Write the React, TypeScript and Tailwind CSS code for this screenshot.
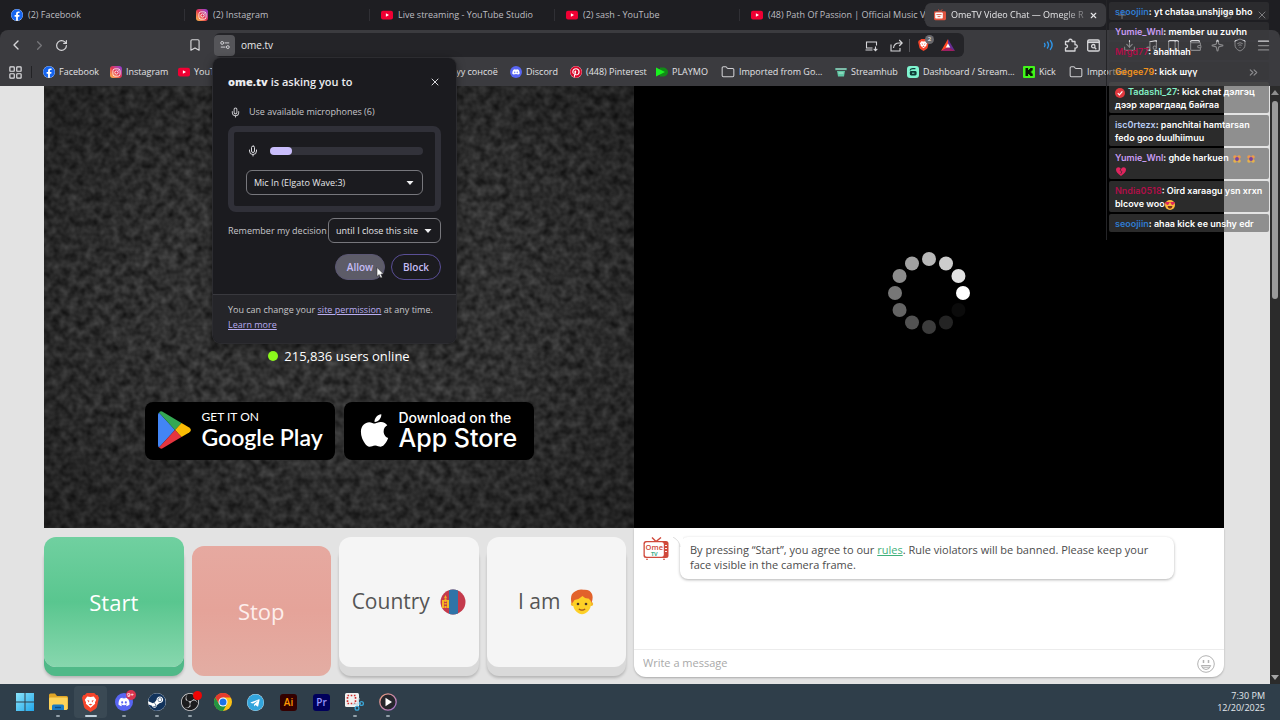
import React from 'react'
import {
  Bookmark,
  ChevronLeft,
  ChevronRight,
  ChevronsRight,
  Download,
  Folder,
  LayoutGrid,
  Menu,
  Mic,
  Minus,
  Music,
  PanelRight,
  Plus,
  RotateCw,
  Sparkle,
  Square,
  Wallet,
  X
} from 'lucide-react'
import { FaApple, FaDiscord, FaFacebook, FaInstagram, FaPinterest, FaSteam, FaTelegram } from 'react-icons/fa'
import { SiObsstudio } from 'react-icons/si'

interface IconProps {
  className?: string
}

const FacebookIcon = () => (
  <span className="flex shrink-0 rounded-full bg-white text-[#1565f0]">
    <FaFacebook size={12} />
  </span>
)

const InstagramIcon = () => (
  <span className="flex h-3 w-3 shrink-0 items-center justify-center rounded-[3px] bg-linear-to-tr from-[#fdc04a] via-[#e4304f] to-[#8a2be2] text-white">
    <FaInstagram size={9} />
  </span>
)

const YoutubeIcon = () => (
  <svg viewBox="0 0 12 12" className="h-3 w-3 shrink-0">
    <rect y="1.8" width="12" height="8.6" rx="2" fill="#f00033" />
    <path d="M4.9 4.3v3.5L8 6.05z" fill="#fff" />
  </svg>
)

const DiscordIcon = () => (
  <span className="flex h-3 w-3 shrink-0 items-center justify-center rounded-full bg-[#5865f2] text-white">
    <FaDiscord size={8} />
  </span>
)

const PinterestIcon = () => (
  <span className="flex shrink-0 rounded-full bg-white text-[#d8082b]">
    <FaPinterest size={12} />
  </span>
)

const PlaymoIcon = () => (
  <svg viewBox="0 0 12 12" className="h-3 w-3 shrink-0">
    <path d="M4 1.5h4Q12 3 12 6t-4 4.500H4z" fill="#128a17" />
    <path d="M0 1.500L9 6l-9 4.500z" fill="#19f01f" />
  </svg>
)

const FolderIcon = () => <Folder size={14} strokeWidth={1.8} className="shrink-0 text-[#cfcfd2]" />

const StreamhubIcon = () => (
  <svg viewBox="0 0 12 12" className="h-3 w-3 shrink-0">
    <path d="M0 2h12v2.2H0z" fill="#4f9c86" />
    <path d="M2 5h8l-1 5.4H3z" fill="#5fc7a4" />
    <path d="M1 3h10M3.5 7h5" stroke="#d9f5ea" strokeWidth="0.7" />
  </svg>
)

const DashboardIcon = () => (
  <svg viewBox="0 0 12 12" className="h-3 w-3 shrink-0">
    <rect width="12" height="12" rx="3" fill="#7ff5d0" />
    <path d="M3 4.4Q3.600 2.600 6 2.600h2.400" stroke="#0d3b35" strokeWidth="1.100" fill="none" />
    <rect x="2.800" y="5" width="6.800" height="4.400" rx="1.400" fill="#0d3b35" />
    <path d="M5 7.2h2.4" stroke="#7ff5d0" strokeWidth="0.9" />
  </svg>
)

const KickIcon = () => (
  <svg viewBox="0 0 12 12" className="h-3 w-3 shrink-0">
    <rect width="12" height="12" rx="1" fill="#41f51a" />
    <path d="M2.5 2h2.6v2h1V3h1V2h2.6v2.6h-1v.8h-1v1.2h1v.8h1V10H7.1V9h-1V8h-1v2H2.5z" fill="#0b1408" />
  </svg>
)

const OmeIcon = () => (
  <svg viewBox="0 0 12 12" className="h-3 w-3 shrink-0">
    <path d="M4 .5L6 2.4 8.4.5" stroke="#e0533f" fill="none" strokeWidth="0.9" />
    <rect y="2.2" width="12" height="9" rx="1.4" fill="#e0533f" />
    <rect x="1.2" y="3.6" width="7.6" height="6" rx="0.8" fill="#fff" />
    <path d="M2.4 5.6h5.2M3.6 7.6h2.8" stroke="#d9503c" strokeWidth="0.9" />
  </svg>
)

const BraveIcon = ({ className }: IconProps) => (
  <svg viewBox="0 0 18 20" className={className}>
    <path d="M5 0h8l2 2h1.5L18 5l-.6 2.500-1.600 7.200q-.4 1.300-1.600 2.100L9 20l-5.200-3.200q-1.200-.8-1.600-2.100L.6 7.500 0 5l1.500-3H3z" fill="#f5442a" />
    <path d="M9 4.300l3.500-.6L15 7l-1.300 3 .2 1.200-2.500 2.200L9 15.500l-2.400-2.100-2.500-2.200.2-1.200L3 7l2.500-3.300z" fill="#fff" />
    <path d="M5.500 7.300l2.300.8-.5 2zM12.500 7.300l-2.300.8.5 2zM7 12l2-.7 2 .7-2 1.200z" fill="#f5442a" />
  </svg>
)

const tabs = [
  { title: '(2) Facebook', icon: FacebookIcon },
  { title: '(2) Instagram', icon: InstagramIcon },
  { title: 'Live streaming - YouTube Studio', icon: YoutubeIcon },
  { title: '(2) sash - YouTube', icon: YoutubeIcon },
  { title: '(48) Path Of Passion | Official Music V', icon: YoutubeIcon }
]

const bookmarks = [
  { title: 'Facebook', icon: FacebookIcon, width: 'w-[67px]' },
  { title: 'Instagram', icon: InstagramIcon, width: 'w-[68px]' },
  { title: 'YouTube', icon: YoutubeIcon, width: 'w-[272px]' },
  { title: 'Дуу сонсоё', icon: null, width: 'w-[60px]' },
  { title: 'Discord', icon: DiscordIcon, width: 'w-[60px]' },
  { title: '(448) Pinterest', icon: PinterestIcon, width: 'w-[86px]' },
  { title: 'PLAYMO', icon: PlaymoIcon, width: 'w-[65px]' },
  { title: 'Imported from Go...', icon: FolderIcon, width: 'w-[114px]' },
  { title: 'Streamhub', icon: StreamhubIcon, width: 'w-[72px]' },
  { title: 'Dashboard / Stream...', icon: DashboardIcon, width: 'w-[116px]' },
  { title: 'Kick', icon: KickIcon, width: 'w-[46px]' },
  { title: 'Imported', icon: FolderIcon, width: 'w-[60px]' }
]

function TabStrip() {
  return (
    <div className="flex h-[30px] items-center bg-[#1e1e22] text-[9px] text-[#bdbdc1]">
      {tabs.map((tab) => (
        <div key={tab.title} className="flex h-3 w-[185px] shrink-0 items-center border-r border-[#303035] pl-[11px]">
          <button className="flex min-w-0 items-center gap-[5px]">
            <tab.icon />
            <span className="whitespace-nowrap">{tab.title}</span>
          </button>
        </div>
      ))}
      <div className="flex h-6 w-[181px] shrink-0 items-center gap-[5px] rounded-md bg-[#3b3b3f] pr-2 pl-[9px] text-[#e6e6e8]">
        <OmeIcon />
        <span className="flex-1 whitespace-nowrap [mask-image:linear-gradient(90deg,#000_110px,transparent_145px)]">
          OmeTV Video Chat — Omegle R
        </span>
        <button aria-label="Close tab">
          <X size={9} strokeWidth={3} />
        </button>
      </div>
      <button aria-label="New tab" className="ml-[10px]">
        <Plus size={12} />
      </button>
      <div className="ml-auto flex items-center gap-6 pr-3">
        <button aria-label="Minimize">
          <Minus size={10} />
        </button>
        <button aria-label="Maximize">
          <Square size={8} />
        </button>
        <button aria-label="Close window">
          <X size={12} />
        </button>
      </div>
    </div>
  )
}

function BraveRewardsIcon() {
  return (
    <svg viewBox="0 0 14 12" className="h-3 w-[14px]">
      <path d="M7 0L0 12l7-3z" fill="#ff4724" />
      <path d="M7 0l7 12-7-3z" fill="#662d91" />
      <path d="M0 12l7-4 7 4z" fill="#9e1f63" />
      <path d="M7 4.500l2.300 4H4.700z" fill="#fff" />
    </svg>
  )
}

function SoundIcon() {
  return (
    <svg viewBox="0 0 12 12" className="h-3 w-3" fill="none" stroke="#2f95e8" strokeWidth="1.4" strokeLinecap="round">
      <path d="M1.5 4.4q1.2 1.6 0 3.2M4.400 3q2.200 3 0 6M7.400 1.600q3.400 4.400 0 8.800" />
    </svg>
  )
}

function Toolbar() {
  return (
    <div className="flex h-7 items-center pt-[2px] text-[#d6d6d9]">
      <div className="flex items-center gap-2 pl-2">
        <button aria-label="Back">
          <ChevronLeft size={16} strokeWidth={2} />
        </button>
        <button aria-label="Forward" className="text-[#77777b]">
          <ChevronRight size={15} strokeWidth={2} />
        </button>
        <button aria-label="Reload">
          <RotateCw size={13} strokeWidth={2.2} />
        </button>
      </div>
      <button aria-label="Bookmark this page" className="ml-[120px]">
        <Bookmark size={14} strokeWidth={2} />
      </button>
      <div className="ml-3 flex h-6 flex-1 items-center rounded-md bg-[#242428]">
        <button aria-label="Site information" className="flex h-[21px] w-[21px] items-center justify-center rounded bg-[#555559]">
          <svg viewBox="0 0 12 12" className="h-[10px] w-[10px]" fill="none" stroke="#dcdce0" strokeWidth="1.1">
            <circle cx="2.600" cy="3.5" r="1.7" />
            <circle cx="9.400" cy="8.5" r="1.7" />
            <path d="M5.5 3.5H11M1 8.5h5.5" />
          </svg>
        </button>
        <input
          aria-label="Address"
          defaultValue="ome.tv"
          className="ml-[6px] min-w-0 flex-1 bg-transparent text-[10px] text-[#e8e8ea] outline-none"
        />
        <div className="flex items-center gap-3 pr-[9px]">
          <button aria-label="Install">
            <svg viewBox="0 0 13 13" className="h-[13px] w-[13px]" fill="none" stroke="currentColor" strokeWidth="1.1">
              <path d="M7.500 9H1.500V3h10v3.500M.5 11h7M10.500 7.500v4M8.700 9.800l1.800 1.800 1.800-1.800" />
            </svg>
          </button>
          <button aria-label="Share" className="border-r border-[#55555a] pr-[6px]">
            <svg viewBox="0 0 13 13" className="h-[13px] w-[13px]" fill="none" stroke="currentColor" strokeWidth="1.1">
              <path d="M1 5.5V12h9V9M3.5 9c.4-3.2 2.400-5 5.700-5H12M9.200 1L12.200 4 9.200 7" />
            </svg>
          </button>
          <button aria-label="Brave Shields" className="relative -ml-1">
            <BraveIcon className="h-3 w-[11px]" />
            <span className="absolute -top-[4px] left-[7px] flex h-[9px] w-[9px] items-center justify-center rounded-full bg-[#68686c] text-[6px] text-white">
              2
            </span>
          </button>
          <button aria-label="Rewards">
            <BraveRewardsIcon />
          </button>
        </div>
      </div>
      <div className="ml-[79px] flex items-center gap-[9px] pr-[9px]">
        <button aria-label="Media sound">
          <SoundIcon />
        </button>
        <button aria-label="Extensions">
          <svg viewBox="0 0 14 14" className="h-[14px] w-[14px]" fill="none" stroke="currentColor" strokeWidth="1.300" strokeLinejoin="round">
            <path d="M1.500 3.500h3.300a1.700 1.700 0 1 1 3.200 0h3v3.300a1.700 1.700 0 1 1 0 3.200v3H1.500V9.800a1.600 1.600 0 1 0 0-3.100z" />
          </svg>
        </button>
        <button aria-label="Search tabs">
          <svg viewBox="0 0 13 13" className="h-[13px] w-[13px]" fill="none" stroke="currentColor" strokeWidth="1.3">
            <rect x="0.700" y="1" width="11.600" height="11" rx="1.300" />
            <path d="M.7 3.200h11.600" strokeWidth="1.800" />
            <circle cx="6.300" cy="7.200" r="1.700" />
            <path d="M7.600 8.500l1.700 1.700" />
          </svg>
        </button>
        <button aria-label="Downloads" className="ml-[14px]">
          <Download size={13} />
        </button>
        <button aria-label="Playlist">
          <Music size={13} />
        </button>
        <button aria-label="Sidebar">
          <PanelRight size={13} />
        </button>
        <button aria-label="Wallet">
          <Wallet size={13} />
        </button>
        <button aria-label="Leo AI">
          <Sparkle size={13} />
        </button>
        <button aria-label="VPN">
          <svg viewBox="0 0 14 14" className="h-[14px] w-[14px]" fill="none" stroke="currentColor" strokeWidth="1">
            <path d="M7 1l5 1.800v4Q12 11 7 13 2 11 2 6.800v-4z" />
            <path d="M4.300 5.700q2.700-2 5.400 0M5.300 7.400q1.700-1.200 3.400 0M7 9v.8" />
          </svg>
        </button>
        <button aria-label="Menu">
          <Menu size={15} />
        </button>
      </div>
    </div>
  )
}

function BookmarksBar() {
  return (
    <div className="flex h-7 items-center overflow-hidden pl-2 text-[9px] text-[#e2e2e5]">
      <button aria-label="All bookmarks">
        <LayoutGrid size={15} strokeWidth={1.9} />
      </button>
      <span className="mr-[11px] ml-2 h-3 w-px shrink-0 bg-[#222225]" />
      {bookmarks.map((item, index) => (
        <div key={index} className={`flex shrink-0 ${item.width}`}>
          <a href="#" className="flex min-w-0 items-center gap-1 whitespace-nowrap">
            {item.icon ? <item.icon /> : ''}
            <span>{item.title}</span>
          </a>
        </div>
      ))}
      <button aria-label="More bookmarks" className="mr-5 ml-auto">
        <ChevronsRight size={13} />
      </button>
    </div>
  )
}

function Caret({ className }: IconProps) {
  return (
    <svg viewBox="0 0 8 4" className={`pointer-events-none absolute h-1 w-2 ${className}`}>
      <path d="M0.500 0h7L4 4z" fill="#f0f0f2" />
    </svg>
  )
}

function PermissionDialog() {
  return (
    <div
      role="dialog"
      aria-labelledby="permission-title"
      className="absolute top-[58px] left-[213px] w-[243px] overflow-hidden rounded-lg bg-[#1b1b1f] text-[9px] text-[#c6c6ca] shadow-[0_0_0_1px_#2c2c30,0_2px_8px_rgba(0,0,0,0.5)]"
    >
      <div className="px-[15px] pt-4 pb-[14px]">
        <div className="flex items-center justify-between">
          <h1 id="permission-title" className="text-[11px] leading-4 font-semibold text-[#ececef]">
            <b>ome.tv</b> is asking you to
          </h1>
          <button aria-label="Close" className="text-[#d8d8dc]">
            <X size={12} />
          </button>
        </div>
        <div className="mt-[14px] flex items-center gap-2 pl-[2px] leading-4">
          <Mic size={11} strokeWidth={2.2} />
          <span>Use available microphones (6)</span>
        </div>
        <div className="mt-[6px] rounded-lg border-6 border-[#303038] px-3 pt-[13px] pb-[11px]">
          <div className="flex items-center gap-[11px]">
            <Mic size={12} className="ml-[1px] text-[#d8d8dc]" />
            <div className="h-2 flex-1 rounded-full bg-[#32323a]">
              <div className="h-2 w-[22px] rounded-full bg-[#c9bdfb]" />
            </div>
          </div>
          <div className="relative mt-[13px]">
            <select
              aria-label="Microphone"
              className="block h-[25px] w-full appearance-none rounded-md border border-[#77777c] bg-transparent px-[7px] text-[#e6e6e9]"
            >
              <option>Mic In (Elgato Wave:3)</option>
            </select>
            <Caret className="top-[11px] right-[9px]" />
          </div>
        </div>
        <div className="mt-[6px] flex items-center justify-between">
          <label htmlFor="remember" className="whitespace-nowrap">
            Remember my decision
          </label>
          <div className="relative">
            <select
              id="remember"
              className="block h-[25px] w-[113px] appearance-none rounded-md border border-[#77777c] bg-transparent px-[7px] text-[#e6e6e9]"
            >
              <option>until I close this site</option>
            </select>
            <Caret className="top-[11px] right-[9px]" />
          </div>
        </div>
        <div className="mt-[11px] flex justify-end gap-[6px] text-[10px] font-semibold text-[#c5bcf5]">
          <button className="relative h-[26px] w-[50px] rounded-full border border-[#5b5773] bg-[#5d5c68]">
            Allow
            <svg viewBox="0 0 8 12" className="absolute top-3 right-0 h-3 w-2">
              <path d="M1 0.500v9l2.200-2 1.500 3.500 1.600-.7-1.500-3.300H7.500z" fill="#fff" stroke="#222" strokeWidth="0.500" />
            </svg>
          </button>
          <button className="h-[26px] w-[50px] rounded-full border border-[#5a4f96]">Block</button>
        </div>
      </div>
      <p className="border-t border-[#39393e] bg-[#252529] px-[15px] pt-[7px] pb-[11px] leading-[15px]">
        You can change your{' '}
        <a href="#" className="text-[#b8acf0] underline">
          site permission
        </a>{' '}
        at any time.
        <br />
        <a href="#" className="text-[#b8acf0] underline">
          Learn more
        </a>
      </p>
    </div>
  )
}

function Static() {
  return (
    <svg className="absolute inset-0 h-full w-full" aria-hidden="true">
      <defs>
        <filter id="static" x="0" y="0" width="100%" height="100%" colorInterpolationFilters="sRGB">
          <feTurbulence type="fractalNoise" baseFrequency="0.12" numOctaves="2" seed="7" />
          <feColorMatrix values="0.280 0 0 0 0.050  0.280 0 0 0 0.050  0.280 0 0 0 0.050  0 0 0 0 1" />
        </filter>
        <radialGradient id="vignette" r="0.750">
          <stop offset="0.400" stopColor="#000" stopOpacity="0" />
          <stop offset="1" stopColor="#000" stopOpacity="0.350" />
        </radialGradient>
      </defs>
      <rect width="100%" height="100%" filter="url(#static)" />
      <rect width="100%" height="100%" fill="url(#vignette)" />
    </svg>
  )
}

function LocalVideo() {
  return (
    <section className="relative flex min-w-0 flex-1 basis-1/2 flex-col items-center justify-end overflow-hidden bg-[#2b2b2b] pb-[68px] text-white">
      <Static />
      <p className="relative mb-[38px] flex items-center gap-[6px] text-[13px] leading-4">
        <span className="h-[10px] w-[10px] rounded-full bg-[#8cf91c]" />
        215,836 users online
      </p>
      <div className="relative flex gap-[9px]">
        <a href="#" className="flex h-[58px] w-[190px] items-center gap-[11px] rounded-lg bg-black pb-[2px] pl-[13px] font-['Lato',sans-serif]">
          <svg viewBox="0 0 33 38" className="h-[38px] w-[33px] shrink-0">
            <path d="M1 1.500Q0 2.500 0 4v30q0 1.500 1 2.500L17 19z" fill="#4285f4" />
            <path d="M1 1.500Q2.800-.4 5 .9L23.500 12 17 19z" fill="#34a853" />
            <path d="M23.500 12l7.700 4.500q3.400 2.500 0 5L23.500 26 17 19z" fill="#fbbc04" />
            <path d="M1 36.500q1.800 1.900 4 .6L23.500 26 17 19z" fill="#e5353f" />
          </svg>
          <span className="flex flex-col">
            <span className="text-[12px] leading-[14px]">GET IT ON</span>
            <span className="text-[23px] leading-[26px] font-semibold">Google Play</span>
          </span>
        </a>
        <a href="#" className="flex h-[58px] w-[190px] items-center gap-[6px] rounded-lg bg-black pb-[2px] pl-3 font-['Inter',sans-serif]">
          <FaApple size={37} className="shrink-0" />
          <span className="flex flex-col">
            <span className="text-[14px] leading-4 font-medium">Download on the</span>
            <span className="text-[25px] leading-[25px] font-medium">App Store</span>
          </span>
        </a>
      </div>
    </section>
  )
}

const spinnerShades = ['#ffffff', '#e2e2e2', '#cdcdcd', '#b8b8b8', '#a2a2a2', '#8c8c8c', '#777777', '#646464', '#525252', '#3c3c3c', '#242424', '#0b0b0b']

function RemoteVideo() {
  return (
    <section className="flex min-w-0 flex-1 basis-1/2 items-center justify-center bg-black pb-7">
      <svg viewBox="0 0 84 84" className="h-[84px] w-[84px]" role="img" aria-label="Loading">
        {spinnerShades.map((shade, index) => {
          const angle = (index * Math.PI) / 6
          return <circle key={shade} cx={42 + 34 * Math.cos(angle)} cy={42 - 34 * Math.sin(angle)} r="7" fill={shade} />
        })}
      </svg>
    </section>
  )
}

function MongoliaFlag() {
  return (
    <svg viewBox="0 0 26 26" className="h-[26px] w-[26px]">
      <clipPath id="flag">
        <circle cx="13" cy="13" r="12.500" />
      </clipPath>
      <g clipPath="url(#flag)">
        <rect width="26" height="26" fill="#c43a4c" />
        <rect x="9" width="9" height="26" fill="#2f74a8" />
        <path d="M2 11h2v8H2zM7 11h2v8H7zM4.400 14h2.200v1.500H4.400zM4.400 17h2.200v2H4.400z" fill="#f5b521" />
        <circle cx="5.500" cy="11.500" r="1.500" fill="#f5b521" />
        <path d="M5.500 6l1.200 2.500a1.200 1.200 0 1 1-2.400 0z" fill="#f5b521" />
      </g>
    </svg>
  )
}

function BoyIcon() {
  return (
    <svg viewBox="0 0 24 26" className="h-[26px] w-6">
      <circle cx="2.800" cy="15" r="2" fill="#f5b829" />
      <circle cx="21.200" cy="15" r="2" fill="#f5b829" />
      <path d="M3 11q0-7 9-7t9 7v5q-1 6-6 8.500-3 1.500-6 0Q4 22 3 16z" fill="#fdd027" />
      <path d="M1.500 14Q-.5 5 5 2.500 9-.5 14 .8q6-.4 8 4.200 1.500 4-.5 9-.5-3-3-4.500-3 .5-6-2.500Q9 10.500 4.500 11 3.500 12 3 13.500z" fill="#e2622b" />
      <circle cx="8" cy="15" r="1.300" fill="#49352b" />
      <circle cx="16" cy="15" r="1.300" fill="#49352b" />
      <path d="M8.800 20q3.200 2.200 6.400 0" stroke="#a3541c" strokeWidth="1.100" fill="none" />
    </svg>
  )
}

function Controls() {
  return (
    <div className="grid min-w-0 flex-1 basis-1/2 grid-cols-4 gap-2 pt-[9px] pr-2 text-[22px]">
      <button className="h-[130px] rounded-xl bg-linear-to-b from-[#70d0a0] via-[#59c68f] to-[#87d7ae] text-white shadow-[0_9px_0_#50b988,0_11px_3px_rgba(0,0,0,0.2)]">
        Start
      </button>
      <button className="mt-[9px] h-[130px] rounded-xl bg-linear-to-b from-[#e6a9a0] via-[#e5a399] to-[#e3ada3] text-[#fdeeec]">Stop</button>
      <button className="flex h-[130px] items-center justify-center gap-[10px] rounded-xl bg-[#f5f5f5] text-[21px] text-[#555] shadow-[0_9px_0_#d9d9d9,0_11px_3px_rgba(0,0,0,0.2)]">
        Country <MongoliaFlag />
      </button>
      <button className="flex h-[130px] items-center justify-center gap-[10px] rounded-xl bg-[#f5f5f5] text-[21px] text-[#555] shadow-[0_9px_0_#d9d9d9,0_11px_3px_rgba(0,0,0,0.2)]">
        I am <BoyIcon />
      </button>
    </div>
  )
}

function ChatPanel() {
  return (
    <div className="flex h-[149px] min-w-0 flex-1 basis-1/2 flex-col rounded-b-xl bg-white text-[#4c4c4c] shadow-[0_1px_2px_rgba(0,0,0,0.25)]">
      <div className="flex flex-1 items-start gap-[11px] pt-[9px] pl-[9px]">
        <svg viewBox="0 0 26 23" className="h-[23px] w-[26px]">
          <path d="M9 .5l4 4L18 .5" stroke="#d0493b" strokeWidth="1.400" fill="none" />
          <rect x="0.500" y="4" width="25" height="17" rx="2.500" fill="#d0493b" />
          <rect x="1.800" y="5.300" width="19" height="14.400" rx="2" fill="#fff" />
          <path d="M4 21l-1 2h2zM21 21l1 2h-2z" fill="#d0493b" />
          <path d="M22 8.500h2M22 11.500h2M22 14.500h2" stroke="#fff" strokeWidth="0.900" />
          <text x="11.300" y="12.500" textAnchor="middle" fontSize="7.500" fontWeight="600" fill="#d0493b">
            Ome
          </text>
          <text x="11.300" y="18.800" textAnchor="middle" fontSize="5.500" fontWeight="700" fill="#3fae8c">
            TV
          </text>
        </svg>
        <div className="relative w-[494px] rounded-lg bg-white px-[10px] pt-[5px] pb-[7px] text-[11px] leading-[15px] shadow-[0_1px_3px_rgba(0,0,0,0.3)]">
          <svg viewBox="0 0 10 10" className="absolute top-0 -left-[7px] h-[10px] w-[10px]">
            <path d="M0 0h10v10H7Q7 5 0 0" fill="#fff" />
            <path d="M0 0Q7 4 7 10" fill="none" stroke="#d4d4d4" strokeWidth="0.800" />
          </svg>
          By pressing “Start”, you agree to our{' '}
          <a href="#" className="text-[#3fb07b] underline">
            rules
          </a>
          . Rule violators will be banned. Please keep your face visible in the camera frame.
        </div>
      </div>
      <div className="flex h-7 items-center border-t border-[#ececec] px-[9px]">
        <input
          aria-label="Message"
          placeholder="Write a message"
          className="min-w-0 flex-1 bg-transparent text-[11px] outline-none placeholder:text-[#a9a9a9]"
        />
        <button aria-label="Emoji">
          <svg viewBox="0 0 18 18" className="h-[18px] w-[18px]" fill="none" stroke="#b3b3b3">
            <circle cx="9" cy="9" r="8.300" />
            <path d="M6.500 5v3M11.500 5v3" strokeWidth="1.500" />
            <path d="M4.300 10.500h9.400q-1 4-4.700 4t-4.700-4zM5 12.200h8" />
          </svg>
        </button>
      </div>
    </div>
  )
}

function Scrollbar() {
  return (
    <div aria-hidden="true" className="flex w-[10px] flex-col items-center justify-between bg-[#2b2b2b] py-1">
      <div className="flex flex-col items-center gap-[6px]">
        <svg viewBox="0 0 8 5" className="h-[5px] w-2">
          <path d="M4 0l4 5H0z" fill="#8e8e8e" />
        </svg>
        <div className="h-[198px] w-[6px] rounded-full bg-[#9a9a9a]" />
      </div>
      <svg viewBox="0 0 8 5" className="h-[5px] w-2">
        <path d="M0 0h8L4 5z" fill="#a5a5a5" />
      </svg>
    </div>
  )
}

const Verified = () => (
  <svg viewBox="0 0 10 10" className="mr-[3px] inline h-[10px] w-[10px]">
    <circle cx="5" cy="5" r="5" fill="#e0383e" />
    <path d="M2.800 5.200l1.600 1.600 3-3.400" fill="none" stroke="#fff" strokeWidth="1.200" />
  </svg>
)

const Flower = () => (
  <svg viewBox="0 0 10 10" className="mx-[1px] inline h-[10px] w-[10px]">
    <circle cx="3" cy="3" r="1.800" fill="#f09a4a" />
    <circle cx="7" cy="3" r="1.800" fill="#f09a4a" />
    <circle cx="3" cy="7" r="1.800" fill="#e8b24a" />
    <circle cx="7" cy="7" r="1.800" fill="#e8b24a" />
    <circle cx="5" cy="5" r="1.900" fill="#7b3f9e" />
  </svg>
)

const BrokenHeart = () => (
  <svg viewBox="0 0 10 9" className="ml-[1px] inline h-[9px] w-[10px]">
    <path d="M5 9Q0 5.500 0 2.800 0 .3 2.500.3 4.200.3 5 2 5.800.3 7.500.3 10 .3 10 2.800 10 5.500 5 9z" fill="#e0245e" />
    <path d="M5 1.500L4 3.500l2 1L4.700 7" stroke="#2b2b2b" strokeWidth="0.700" fill="none" />
  </svg>
)

const HeartEyes = () => (
  <svg viewBox="0 0 10 10" className="inline h-[10px] w-[10px]">
    <circle cx="5" cy="5" r="5" fill="#fcb83c" />
    <path d="M.5 2.500h3.800L2.500 5zM5.700 2.500h3.800L7.500 5z" fill="#e0245e" stroke="#e0245e" strokeLinejoin="round" />
    <path d="M2.500 6h5q-.5 2.800-2.500 2.800T2.500 6z" fill="#7a2c1c" />
  </svg>
)

interface ChatMessage {
  user: string
  color: string
  text: string
  before?: React.ReactNode
  after?: React.ReactNode
  muted?: boolean
}

const messages: ChatMessage[] = [
  { user: 'seoojiin', color: 'text-[#2f7bd0]', text: 'yt chataa unshjiga bho', muted: true },
  { user: 'Yumie_Wnl', color: 'text-[#c79bf2]', text: 'member uu zuvhn', muted: true },
  { user: 'Mrgd77', color: 'text-[#b00e48]', text: 'ahahhah', muted: true },
  { user: 'Gegee79', color: 'text-[#f0921e]', text: 'kick шүү', muted: true },
  { user: 'Tadashi_27', color: 'text-[#84f0c6]', text: 'kick chat дэлгэц дээр харагдаад байгаа', before: <Verified /> },
  { user: 'isc0rtezx', color: 'text-[#b9cdf5]', text: 'panchitai hamtarsan fedo goo duulhiimuu' },
  {
    user: 'Yumie_Wnl',
    color: 'text-[#c79bf2]',
    text: 'ghde harkuen ',
    after: (
      <>
        <Flower /> <Flower />
        <br />
        <BrokenHeart />
      </>
    )
  },
  { user: 'Nndia0518', color: 'text-[#b00e48]', text: 'Oird xaraagu ysn xrxn blcove woo', after: <HeartEyes /> },
  { user: 'seoojiin', color: 'text-[#2f7bd0]', text: 'ahaa kick ee unshy edr' }
]

function StreamChat() {
  return (
    <aside className="absolute top-0 right-[11px] h-[240px] w-[163px] border-l border-[#242427] pt-[2px] pl-[2px]">
      <ul className="flex flex-col gap-[2px] font-['Inter',sans-serif] text-[9px] leading-[13px] font-semibold text-white">
        {messages.map((message, index) => (
          <li
            key={index}
            className={`rounded-[2px] pt-[3px] pb-[2px] pl-[6px] ${message.muted ? 'bg-[#38383a]/50' : 'bg-[#4d4d4d]/56'}`}
          >
            {message.before}
            <span className={message.color}>{message.user}</span>: {message.text}
            {message.after}
          </li>
        ))}
      </ul>
    </aside>
  )
}

const ExplorerIcon = () => (
  <svg viewBox="0 0 20 18" className="h-[18px] w-5">
    <path d="M1 2q0-1.500 1.500-1.500H7l2 2.500h9.500Q20 3 20 4.500V16H1z" fill="#e0a526" />
    <rect x="1" y="4.500" width="18.500" height="12.500" rx="1.200" fill="#fcd35a" />
    <path d="M4 17v-4q0-1.500 1.500-1.500h9Q16 11.500 16 13v4z" fill="#1b7bc4" />
    <path d="M7 14.500h6" stroke="#0d4c86" strokeWidth="1.300" />
  </svg>
)

const WindowsIcon = () => (
  <svg viewBox="0 0 18 18" className="h-[18px] w-[18px]">
    <defs>
      <linearGradient id="win" x1="0" y1="0" x2="1" y2="1">
        <stop stopColor="#8be4fb" />
        <stop offset="1" stopColor="#22a7ea" />
      </linearGradient>
    </defs>
    <path d="M0 0h8.500v8.500H0zM9.500 0H18v8.500H9.500zM0 9.500h8.500V18H0zM9.500 9.500H18V18H9.500z" fill="url(#win)" />
  </svg>
)

const ChromeIcon = () => (
  <svg viewBox="0 0 18 18" className="h-[18px] w-[18px]">
    <circle cx="9" cy="9" r="9" fill="#fbc116" />
    <path d="M1.200 4.500A9 9 0 0 1 16.800 4.500H9L5.100 11.250z" fill="#e33b2e" />
    <path d="M1.200 4.500A9 9 0 0 0 9 18l3.900-6.750H5.100z" fill="#229342" />
    <circle cx="9" cy="9" r="4.500" fill="#fff" />
    <circle cx="9" cy="9" r="3.500" fill="#1a73e8" />
  </svg>
)

const SnipIcon = () => (
  <svg viewBox="0 0 19 18" className="h-[18px] w-[19px]">
    <rect width="14" height="14" rx="1.500" fill="#f1f1f1" />
    <rect x="2.500" y="2.500" width="8" height="8" fill="none" stroke="#d02b2b" strokeWidth="1.600" strokeDasharray="1.600 1.600" />
    <path d="M14 5l-2 8M7.500 11.500l8-1" stroke="#c6dbe6" strokeWidth="1.300" />
    <circle cx="16.500" cy="10.500" r="1.900" fill="none" stroke="#3aa6d8" strokeWidth="1.300" />
    <circle cx="12" cy="15.300" r="1.900" fill="none" stroke="#3aa6d8" strokeWidth="1.300" />
  </svg>
)

const PlayerIcon = () => (
  <svg viewBox="0 0 18 18" className="h-[18px] w-[18px]">
    <defs>
      <linearGradient id="ring" x1="0" y1="0" x2="1" y2="1">
        <stop stopColor="#f0a07c" />
        <stop offset="1" stopColor="#a06fd0" />
      </linearGradient>
    </defs>
    <circle cx="9" cy="9" r="8.200" fill="#26262c" stroke="url(#ring)" strokeWidth="1.300" />
    <path d="M6.500 4.800v8.400L13 9z" fill="#fff" />
  </svg>
)

const apps = [
  { name: 'Start', icon: <WindowsIcon /> },
  { name: 'File Explorer', icon: <ExplorerIcon />, running: true },
  { name: 'Brave', icon: <BraveIcon className="h-[19px] w-[17px]" />, running: true, active: true },
  {
    name: 'Discord',
    running: true,
    icon: (
      <span className="relative flex h-[18px] w-[18px] items-center justify-center rounded-full bg-[#5865f2] text-white">
        <FaDiscord size={12} />
        <span className="absolute -top-[3px] -right-[3px] flex h-[10px] w-[10px] items-center justify-center rounded-full bg-[#d9344f] text-[6px] font-semibold">
          9+
        </span>
      </span>
    )
  },
  {
    name: 'Steam',
    running: true,
    icon: (
      <span className="flex rounded-full bg-white text-[#12335c]">
        <FaSteam size={18} />
      </span>
    )
  },
  {
    name: 'OBS Studio',
    running: true,
    icon: (
      <span className="relative flex rounded-full bg-[#1b1b1d] text-[#d5d5d8]">
        <SiObsstudio size={18} />
        <span className="absolute -top-[2px] -right-[3px] h-[9px] w-[9px] rounded-full bg-[#f00505]" />
      </span>
    )
  },
  { name: 'Chrome', icon: <ChromeIcon /> },
  {
    name: 'Telegram',
    icon: (
      <span className="flex rounded-full bg-white text-[#33a5dc]">
        <FaTelegram size={17} />
      </span>
    )
  },
  {
    name: 'Illustrator',
    icon: (
      <span className="flex h-[17px] w-[17px] items-center justify-center rounded-[3px] bg-[#330000] text-[10px] font-semibold text-[#ff9a00]">
        Ai
      </span>
    )
  },
  {
    name: 'Premiere Pro',
    icon: (
      <span className="flex h-[17px] w-[17px] items-center justify-center rounded-[3px] bg-[#00005b] text-[10px] font-semibold text-[#9999ff]">
        Pr
      </span>
    )
  },
  { name: 'Snipping Tool', icon: <SnipIcon />, running: true },
  { name: 'Media Player', icon: <PlayerIcon />, running: true }
]

function Taskbar() {
  return (
    <footer className="flex h-9 items-center justify-between bg-[#2f3e4a] pr-[15px] pl-2">
      <div className="flex">
        {apps.map((app) => (
          <button
            key={app.name}
            aria-label={app.name}
            className={`flex h-8 w-[33px] flex-col items-center justify-end rounded ${app.active ? 'bg-[#3a4954]' : ''}`}
          >
            <span className="flex h-5 items-center">{app.icon}</span>
            <span
              className={`mt-[3px] mb-[1px] h-[2px] rounded-full ${
                app.active ? 'w-3 bg-[#c3d3de]' : app.running ? 'w-1 bg-[#93a0aa]' : 'w-1'
              }`}
            />
          </button>
        ))}
      </div>
      <div className="text-right text-[9px] leading-3 text-[#e3e8ec]">
        <p>7:30 PM</p>
        <p>12/20/2025</p>
      </div>
    </footer>
  )
}

export default function App() {
  return (
    <div className="relative flex min-h-screen flex-col overflow-hidden bg-[#e3e3e3] font-['Open_Sans','Noto_Sans',sans-serif]">
      <header className="bg-[#1e1e22]">
        <TabStrip />
        <div className="rounded-t-lg bg-[#3b3b3f]">
          <Toolbar />
          <BookmarksBar />
        </div>
      </header>
      <main className="flex flex-1">
        <div className="mr-[46px] ml-11 flex flex-1 flex-col">
          <div className="flex flex-1">
            <LocalVideo />
            <RemoteVideo />
          </div>
          <div className="flex h-[156px]">
            <Controls />
            <ChatPanel />
          </div>
        </div>
        <Scrollbar />
      </main>
      <Taskbar />
      <PermissionDialog />
      <StreamChat />
    </div>
  )
}
